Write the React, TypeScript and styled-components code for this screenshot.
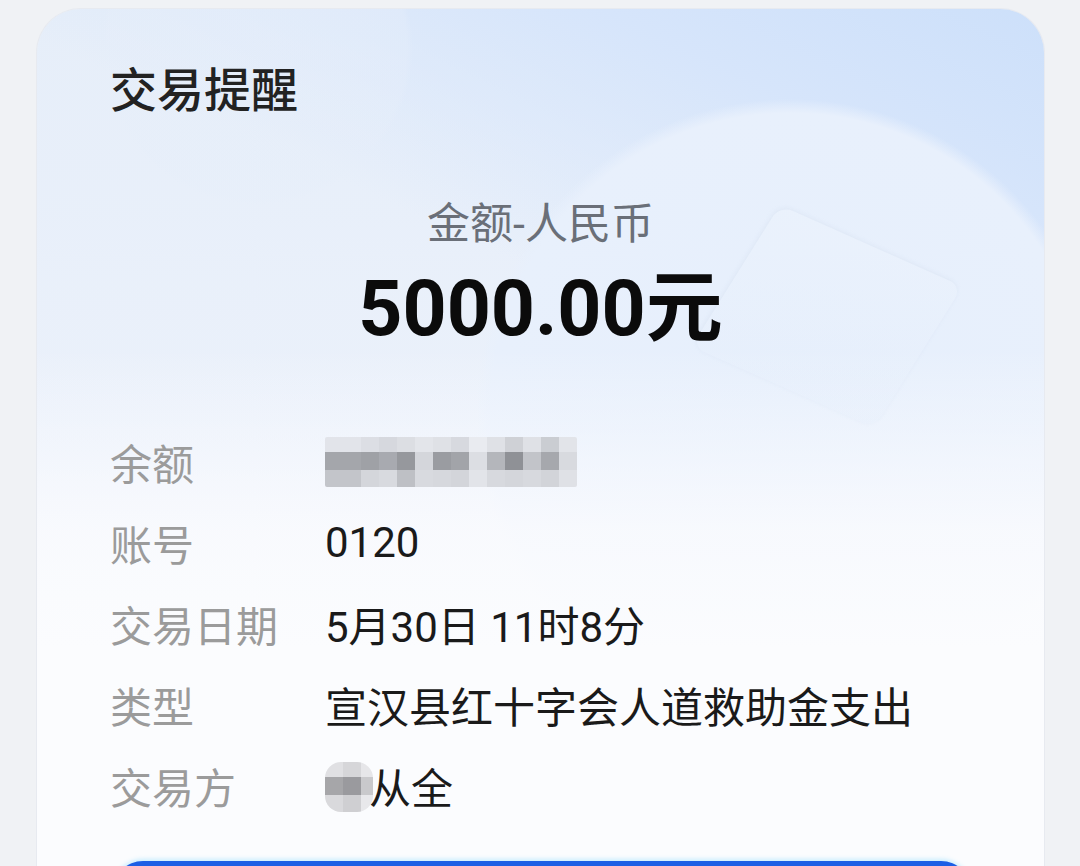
import React from 'react';
import styled, { createGlobalStyle } from 'styled-components';

const GlobalStyle = createGlobalStyle`
    html, body {
        margin: 0;
        padding: 0;
        background: #f0f2f5;
        overflow: hidden;
    }
    body {
        font-family: "Roboto", "Noto Sans CJK SC", sans-serif;
    }
`;

const Page = styled.div`
    width: 1080px;
    height: 866px;
    padding: 9px 36px 0 37px;
    box-sizing: border-box;
    overflow: hidden;
`;

const Card = styled.div`
    position: relative;
    width: 1007px;
    min-height: 1000px;
    box-sizing: border-box;
    padding: 50px 76px 0 73px;
    border-radius: 44px;
    overflow: hidden;
    background:
        linear-gradient(180deg, rgba(251, 252, 254, 0) 0px, rgba(251, 252, 254, 0) 340px, rgba(250, 251, 254, 0.85) 520px, #fbfcfe 640px),
        radial-gradient(circle at 753px 404px, #e6effc 0, #e8f0fc 300px, rgba(232, 240, 252, 0) 314px),
        radial-gradient(circle at 220px 40px, rgba(230, 238, 250, 0.5) 0, rgba(230, 238, 250, 0.35) 150px, rgba(230, 238, 250, 0) 156px),
        linear-gradient(205deg, #cde0fa 0%, #d6e5fb 14%, rgba(225, 236, 251, 0) 34%),
        linear-gradient(180deg, #e6eef9 0%, #ebf1fb 45%, #f4f7fc 70%);
    box-shadow: 0 0 0 1px rgba(225, 229, 236, 0.6);
`;

const Decor = styled.div`
    position: absolute;
    left: 690px;
    top: 225px;
    width: 200px;
    height: 165px;
    border-radius: 14px;
    transform: rotate(24deg) skewX(-8deg);
    background: linear-gradient(160deg, rgba(255, 255, 255, 0.12), rgba(226, 236, 250, 0.25));
    box-shadow: -1px -1px 4px rgba(190, 205, 225, 0.22);
    pointer-events: none;
`;

const Content = styled.div`
    position: relative;
    display: flex;
    flex-direction: column;
`;

const Title = styled.div`
    font-size: 47px;
    line-height: 64px;
    font-weight: 500;
    color: #222222;
`;

const AmountBlock = styled.div`
    display: flex;
    flex-direction: column;
    align-items: center;
    margin-top: 73px;
    padding-left: 3px;
`;

const AmountLabel = styled.div`
    font-size: 43px;
    line-height: 56px;
    color: #6a6f78;
`;

const AmountValue = styled.div`
    margin-top: 9px;
    font-size: 77px;
    line-height: 96px;
    font-weight: 700;
    color: #0b0b0b;
`;

const Rows = styled.div`
    display: flex;
    flex-direction: column;
    margin-top: 64px;
`;

const Row = styled.div`
    display: flex;
    align-items: center;
    height: 81px;
`;

const Label = styled.div`
    width: 215px;
    flex-shrink: 0;
    font-size: 42px;
    color: #9b9b9b;
`;

const Value = styled.div`
    display: flex;
    align-items: center;
    font-size: 42px;
    color: #1a1a1a;
    white-space: nowrap;
`;

const Mosaic = styled.div<{ $cols: string; $radius: number }>`
    display: grid;
    grid-template-columns: ${p => p.$cols};
    grid-template-rows: 15px 18px 17px;
    border-radius: ${p => p.$radius}px;
    overflow: hidden;
    filter: blur(0.5px);
`;

const Cell = styled.div<{ $c: string }>`
    background: ${p => p.$c};
`;

const NameMosaic = styled(Mosaic)`
    margin-right: -4px;
    margin-top: 2px;
`;

const PrimaryButton = styled.div`
    margin: 35px -3px 0 3px;
    height: 120px;
    border-radius: 30px;
    background: #1c5fe5;
    box-shadow: 0 -2px 4px rgba(140, 220, 255, 0.45);
`;

const balanceCells: string[][] = [
    ['#e2e4ea', '#e2e4ea', '#dcdee4', '#d6d8de', '#dcdee3', '#e3e5ea', '#dfe1e6', '#d7d9df', '#e9ebf0', '#dfe1e6', '#cfd1d6', '#dfe1e6', '#cacdd2', '#e2e4e9'],
    ['#a4a6ab', '#a4a6ab', '#9fa1a6', '#a8aab0', '#96989d', '#d4d6db', '#9a9ca1', '#a2a4a9', '#dcdee3', '#b4b6bb', '#8f9196', '#c2c4c9', '#a6a8ad', '#d8dadf'],
    ['#c3c5ca', '#c3c5ca', '#d4d6db', '#d8dadf', '#bec0c5', '#d8dadf', '#d6d8dd', '#d3d5da', '#e2e4e9', '#d7d9de', '#d4d6db', '#d7d9de', '#d2d4d9', '#dfe1e6'],
];

const nameCells: string[][] = [
    ['#e0e0e3', '#d6d6d9', '#e6e6e9'],
    ['#a6a6a9', '#9a9a9e', '#c9c9cc'],
    ['#d9d9dc', '#cfcfd2', '#e8e8eb'],
];

const renderCells = (cells: string[][]) =>
    cells.flatMap((row, r) => row.map((c, i) => <Cell key={`${r}-${i}`} $c={c} />));

const App: React.FC = () => {
    return (
        <React.Fragment>
            <GlobalStyle />
            <Page>
                <Card>
                    <Decor />
                    <Content>
                        <Title>交易提醒</Title>
                        <AmountBlock>
                            <AmountLabel>金额-人民币</AmountLabel>
                            <AmountValue>5000.00元</AmountValue>
                        </AmountBlock>
                        <Rows>
                            <Row>
                                <Label>余额</Label>
                                <Mosaic $cols="repeat(14, 18px)" $radius={2}>
                                    {renderCells(balanceCells)}
                                </Mosaic>
                            </Row>
                            <Row>
                                <Label>账号</Label>
                                <Value>0120</Value>
                            </Row>
                            <Row>
                                <Label>交易日期</Label>
                                <Value>5月30日 11时8分</Value>
                            </Row>
                            <Row>
                                <Label>类型</Label>
                                <Value>宣汉县红十字会人道救助金支出</Value>
                            </Row>
                            <Row>
                                <Label>交易方</Label>
                                <Value>
                                    <NameMosaic $cols="18px 18px 12px" $radius={16}>
                                        {renderCells(nameCells)}
                                    </NameMosaic>
                                    从全
                                </Value>
                            </Row>
                        </Rows>
                        <PrimaryButton />
                    </Content>
                </Card>
            </Page>
        </React.Fragment>
    );
};

export default App;
